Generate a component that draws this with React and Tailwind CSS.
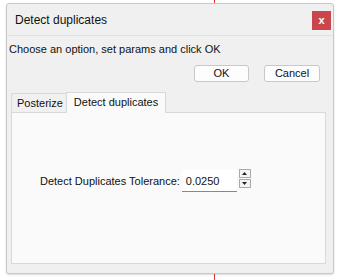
export default function App() {
  const font = { fontFamily: '"Liberation Sans", Arial, sans-serif' };
  return (
    <div className="relative w-[339px] h-[280px] bg-white overflow-hidden" style={font}>
      <div className="absolute left-[214px] top-0 w-px h-[280px] bg-[#d33]" />
      <div className="absolute left-[6px] top-[3px] w-[328px] h-[271px] rounded-[3px] border border-[#c8c8c8] bg-[#f0f0f0] shadow-[0_1px_2px_rgba(0,0,0,0.15)] flex flex-col">
        <div className="h-[32px] flex items-center justify-between pl-[8px] pr-[2px] border-b border-[#e2e2e2]">
          <span className="text-[12px] text-[#111]">Detect duplicates</span>
          <div className="w-[19px] h-[19px] bg-[#c9474a] text-white text-[11px] font-bold flex items-center justify-center leading-none mt-[2px]">x</div>
        </div>
        <div className="pl-[2px] pt-[5px] text-[11px] text-[#111] leading-[16px]">Choose an option, set params and click OK</div>
        <div className="flex justify-end gap-[15px] pr-[13px] mt-[8px]">
          <button className="w-[55px] h-[17px] bg-[#fdfdfd] border border-[#c8c8c8] rounded-[3px] text-[11px] leading-none text-[#111]">OK</button>
          <button className="w-[56px] h-[17px] bg-[#fdfdfd] border border-[#c8c8c8] rounded-[3px] text-[11px] leading-none text-[#111]">Cancel</button>
        </div>
        <div className="mt-[9px] ml-[4px] mr-[7px] flex flex-col">
          <div className="flex items-end h-[21px]">
            <div className="h-[19px] pl-[5px] pr-[3px] border border-b-0 border-r-0 border-[#d9d9d9] bg-[#f0f0f0] text-[11px] leading-[19px] text-[#111]">Posterize</div>
            <div className="h-[21px] pl-[7px] pr-[7px] border border-b-0 border-[#d9d9d9] bg-[#fafafa] text-[11px] leading-[19px] text-[#111] -mb-px relative z-10">Detect duplicates</div>
          </div>
          <div className="h-[152px] border border-[#d9d9d9] bg-[#fafafa] flex items-center pl-[28px] pb-[14px]">
            <span className="text-[11px] text-[#111] mr-[2px]">Detect Duplicates Tolerance:</span>
            <div className="w-[55px] h-[22px] bg-white border-b border-[#888] text-[11px] leading-[22px] pl-[4px] text-[#111]">0.0250</div>
            <div className="ml-[2px] -mt-[6px] flex flex-col gap-px">
              <div className="w-[12px] h-[9px] bg-[#f4f4f4] border border-[#aaa] flex items-center justify-center">
                <svg width="5" height="3" viewBox="0 0 5 3"><path d="M2.5 0L5 3H0z" fill="#222"/></svg>
              </div>
              <div className="w-[12px] h-[9px] bg-[#f4f4f4] border border-[#aaa] flex items-center justify-center">
                <svg width="5" height="3" viewBox="0 0 5 3"><path d="M0 0H5L2.5 3z" fill="#222"/></svg>
              </div>
            </div>
          </div>
        </div>
      </div>
    </div>
  );
}
